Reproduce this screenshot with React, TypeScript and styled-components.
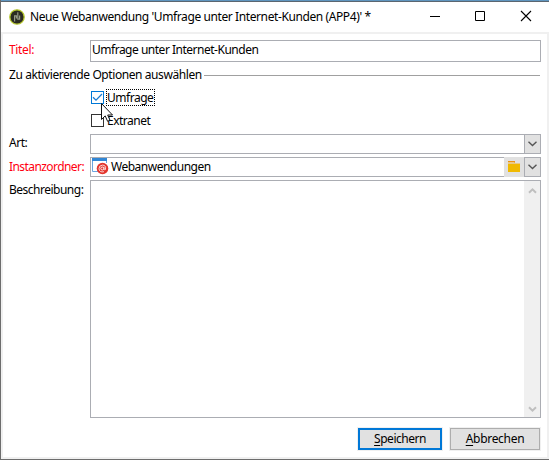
import React from "react";
import styled, { createGlobalStyle } from "styled-components";

const Global = createGlobalStyle`
  * { box-sizing: border-box; }
  body { margin: 0; overflow: hidden; background: #fff; }
`;

const Window = styled.div`
  width: 549px;
  height: 460px;
  display: flex;
  flex-direction: column;
  border-left: 1px solid #6d6d6d;
  border-bottom: 1px solid #6d6d6d;
  background: #fff;
  color: #000;
  font: 12px/16px "Noto Sans", "Open Sans", sans-serif;
`;

const TopEdge = styled.div`
  height: 2px;
  flex: none;
  background: #5f95bf;
  border-bottom: 1px solid #5b6670;
`;

const TitleBar = styled.header`
  height: 30px;
  flex: none;
  display: flex;
  align-items: center;
  padding-left: 8px;
`;

const Text = styled.span<{ $spacing?: number }>`
  white-space: pre;
  letter-spacing: ${(p) => p.$spacing ?? -0.48}px;
`;

const Caption = styled(Text)`
  flex: 1;
  margin-left: 5px;
`;

const WindowControls = styled.div`
  display: flex;
  flex: none;
  width: 137px;
  margin-bottom: 2px;
  svg { flex: none; width: 46px; height: 28px; display: block; }
`;

const Frame = styled.main`
  flex: 1;
  min-height: 0;
  border: 2px solid #f0f0f0;
  display: flex;
  flex-direction: column;
  padding: 6px 6px 7px;
`;

const Row = styled.div<{ $height: number; $gap?: number }>`
  display: flex;
  height: ${(p) => p.$height}px;
  margin-bottom: ${(p) => p.$gap ?? 3}px;
  flex: none;
`;

const Label = styled.label<{ $required?: boolean; $top?: number }>`
  width: 81px;
  flex: none;
  padding-top: ${(p) => p.$top ?? 2}px;
  color: ${(p) => (p.$required ? "#ff0010" : "#000")};
`;

const Field = styled.div`
  width: 451px;
  height: 100%;
  display: flex;
  border: 1px solid #abadb3;
`;

const FieldText = styled.div<{ $top?: number }>`
  flex: 1;
  display: flex;
  padding: ${(p) => p.$top ?? 1}px 0 0 1px;
`;

const FolderName = styled(Text)`
  margin: 1px 0 0 2px;
`;

const DropButton = styled.div`
  width: 17px;
  margin: -1px -1px -1px 0;
  border: 1px solid #abadb3;
  background: #e1e1e1;
  display: flex;
  align-items: center;
  justify-content: center;
`;

const FolderButton = styled.div`
  width: 20px;
  margin: -1px 0;
  background: #e1e1e1;
  padding: 4px 0 0 4px;
  svg { display: block; }
`;

const GroupHeading = styled.div`
  display: flex;
  height: 16px;
  margin: 5px 1px 6px 0;
  align-items: center;
`;

const Rule = styled.div`
  width: 336px;
  height: 1px;
  margin-left: auto;
  background: #a0a0a0;
`;

const CheckRow = styled.div<{ $bottom: number }>`
  display: flex;
  align-items: center;
  height: 17px;
  margin: 0 0 ${(p) => p.$bottom}px 82px;
`;

const CheckBox = styled.div<{ $active?: boolean }>`
  width: 13px;
  height: 13px;
  border: 1px solid ${(p) => (p.$active ? "#0078d7" : "#333")};
  svg { display: block; }
`;

const CheckLabel = styled.div<{ $focused?: boolean }>`
  position: relative;
  height: 17px;
  width: 49px;
  margin-left: 2px;
  border: ${(p) => (p.$focused ? "1px dotted #000" : "1px solid transparent")};
  line-height: 16px;
`;

const Cursor = styled.svg`
  position: absolute;
  left: -6px;
  top: 13px;
  z-index: 2;
`;

const ScrollTrack = styled.div`
  width: 16px;
  margin-left: auto;
  background: #f0f0f0;
  display: flex;
  flex-direction: column;
  justify-content: space-between;
  align-items: center;
  padding: 6px 0 4px;
`;

const Footer = styled.footer`
  display: flex;
  justify-content: flex-end;
  gap: 8px;
  padding-right: 1px;
`;

const Button = styled.button<{ $primary?: boolean; $width: number }>`
  width: ${(p) => p.$width}px;
  height: 22px;
  padding: 0;
  border: ${(p) => (p.$primary ? "2px solid #0078d7" : "1px solid #adadad")};
  background: #e1e1e1;
  color: #000;
  font: inherit;
  line-height: 18px;
  border-radius: 0;
  box-shadow: 0 0 0 1px #f0f0f0;
  u { text-underline-offset: 2px; text-decoration-thickness: 1px; }
`;

const AppIcon = () => (
  <svg width="16" height="16" viewBox="0 0 16 16">
    <circle cx="8" cy="8" r="7.2" fill="#2b2b22" stroke="#b5c72c" strokeWidth="1.3" />
    <path d="M5.6 12.5V6.8H7.4V9.6M8.8 3.2V10.2H10.6V6.6" fill="none" stroke="#959a86" strokeWidth="1.2" />
  </svg>
);

const WebAppIcon = () => (
  <svg width="17" height="17" viewBox="0 0 17 17">
    <path d="M.5 2V13.5H6M14.5 3V5" fill="none" stroke="#6ba5df" />
    <path d="M0 0H15V3H0Z" fill="#3287d5" />
    <circle cx="10.5" cy="10.5" r="5.8" fill="#e3352d" />
    <circle cx="10.3" cy="10.5" r="1.5" fill="none" stroke="#fff" strokeWidth=".9" />
    <path d="M12 8.8V11.2Q12.4 12.3 13.4 11.6Q14.5 7.3 10.5 7.1Q6.9 7.3 7 10.8Q7.5 14.8 12 13.7" fill="none" stroke="#fff" strokeWidth=".8" />
  </svg>
);

const DropArrow = () => (
  <svg width="9" height="6" viewBox="0 0 9 6">
    <path d="M.5 .8L4.5 4.5L8.5 .8" fill="none" stroke="#555" strokeWidth="1.4" />
  </svg>
);

const ScrollArrow = ({ down = false }: { down?: boolean }) => (
  <svg width="9" height="7" viewBox="0 0 9 7">
    <path d={down ? "M1 1.2L4.5 4.7L8 1.2" : "M1 5.8L4.5 2.3L8 5.8"} fill="none" stroke="#bfbfbf" strokeWidth="2" />
  </svg>
);

export default function App() {
  return (
    <>
      <Global />
      <Window>
        <TopEdge />
        <TitleBar>
          <AppIcon />
          <Caption $spacing={-0.4}>Neue Webanwendung 'Umfrage unter Internet-Kunden (APP4)' *</Caption>
          <WindowControls>
            <svg viewBox="0 0 46 28"><path d="M18 14.5H28" stroke="#000" /></svg>
            <svg viewBox="0 0 46 28"><path d="M17.5 9.5H26.5V18.5H17.5Z" fill="none" stroke="#000" /></svg>
            <svg viewBox="0 0 46 28"><path d="M17 9L27 19M27 9L17 19" stroke="#000" strokeWidth="1.1" /></svg>
          </WindowControls>
        </TitleBar>
        <Frame>
          <Row $height={22} $gap={0}>
            <Label $required><Text $spacing={-0.35}>Titel:</Text></Label>
            <Field><FieldText><Text $spacing={-0.49}>Umfrage unter Internet-Kunden</Text></FieldText></Field>
          </Row>
          <GroupHeading>
            <Text $spacing={-0.42}>Zu aktivierende Optionen auswählen</Text>
            <Rule />
          </GroupHeading>
          <CheckRow $bottom={6}>
            <CheckBox $active>
              <svg width="11" height="11" viewBox="0 0 11 11"><path d="M1 5.3L4 8.2L10 2" fill="none" stroke="#1b7bd1" strokeWidth="1.3" /></svg>
            </CheckBox>
            <CheckLabel $focused>
              <Text>Umfrage</Text>
              <Cursor width="12" height="19" viewBox="0 0 12 19">
                <path d="M.5 .5V16.5L4.2 12.9L6.6 18.3L9 17.2L6.7 12H11.5Z" fill="#fff" stroke="#111" />
              </Cursor>
            </CheckLabel>
          </CheckRow>
          <CheckRow $bottom={5}>
            <CheckBox />
            <CheckLabel><Text $spacing={-0.5}>Extranet</Text></CheckLabel>
          </CheckRow>
          <Row $height={20}>
            <Label $top={1}><Text>Art:</Text></Label>
            <Field><FieldText /><DropButton><DropArrow /></DropButton></Field>
          </Row>
          <Row $height={20}>
            <Label $required><Text $spacing={-0.57}>Instanzordner:</Text></Label>
            <Field>
              <FieldText $top={0}><WebAppIcon /><FolderName $spacing={-0.5}>Webanwendungen</FolderName></FieldText>
              <FolderButton>
                <svg width="12" height="12" viewBox="0 0 12 12">
                  <path d="M0 0H7V2H0Z" fill="#ee9112" /><path d="M0 1H6L7 2H12V4H0Z" fill="#e9c886" /><path d="M0 3H12V11H0Z" fill="#f0b900" />
                </svg>
              </FolderButton>
              <DropButton><DropArrow /></DropButton>
            </Field>
          </Row>
          <Row $height={238} $gap={10}>
            <Label><Text $spacing={-0.5}>Beschreibung:</Text></Label>
            <Field><ScrollTrack><ScrollArrow /><ScrollArrow down /></ScrollTrack></Field>
          </Row>
          <Footer>
            <Button $primary $width={84}><Text><u>S</u>peichern</Text></Button>
            <Button $width={90}><Text $spacing={-0.3}><u>A</u>bbrechen</Text></Button>
          </Footer>
        </Frame>
      </Window>
    </>
  );
}
